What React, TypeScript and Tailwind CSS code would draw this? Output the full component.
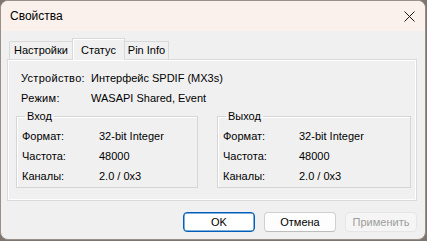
import React from 'react';

const font = { fontFamily: '"Liberation Sans", Arial, sans-serif' };

function InfoRow({ label, value }: { label: string; value: string }) {
    return (
        <div className="flex h-[20px] items-center">
            <span className="w-[70px] tracking-[0.3px]">{label}</span>
            <span>{value}</span>
        </div>
    );
}

function Group({ title, labelWidth, className }: { title: string; labelWidth: string; className: string }) {
    const rows = [
        ['Формат:', '32-bit Integer'],
        ['Частота:', '48000'],
        ['Каналы:', '2.0 / 0x3'],
    ];
    return (
        <fieldset className={`border border-[#d5d5d5] shadow-[inset_1px_1px_0_#ffffff] pb-[1px] ${className}`}>
            <legend className="ml-[8px] px-[2px] leading-[13px]">{title}</legend>
            <div className="pt-[3px] pl-[5px]">
                {rows.map(([l, v]) => (
                    <div key={l} className="flex h-[20px] items-center">
                        <span className={labelWidth}>{l}</span>
                        <span>{v}</span>
                    </div>
                ))}
            </div>
        </fieldset>
    );
}

export default function App() {
    return (
        <div className="w-[427px] h-[241px] bg-[#7d756f] text-[11px] text-black" style={font}>
            <div className="w-[426px] h-[240px] flex flex-col rounded-lg overflow-hidden border border-[#9a8f86] bg-[#f0f0f0]">
                {/* Title bar */}
                <div className="h-[30px] flex items-center justify-between bg-[#faf1ec] pl-[9px] pr-[9px]">
                    <span className="text-[12px]">Свойства</span>
                    <svg width="11" height="11" viewBox="0 0 11 11" className="mr-[1px]">
                        <path d="M0.5 0.5 L10.5 10.5 M10.5 0.5 L0.5 10.5" stroke="#1a1a1a" strokeWidth="1" />
                    </svg>
                </div>

                {/* Body */}
                <div className="flex-1 flex flex-col pl-[6px] pr-[8px] pt-[7px]">
                    {/* Tabs */}
                    <div className="flex items-end h-[21px] pl-[2px] relative z-10">
                        <div className="h-[18px] w-[64px] flex items-center justify-center border border-b-0 border-[#d9d9d9] bg-[#f0f0f0]">
                            Настройки
                        </div>
                        <div className="h-[22px] -mb-px w-[53px] -ml-px flex items-start pt-[3px] justify-center border border-b-0 border-[#d9d9d9] bg-[#f0f0f0] shadow-[inset_1px_1px_0_#ffffff]">
                            Статус
                        </div>
                        <div className="h-[18px] w-[45px] -ml-px flex items-center justify-center border border-b-0 border-[#d9d9d9] bg-[#f0f0f0]">
                            Pin Info
                        </div>
                    </div>

                    {/* Panel */}
                    <div className="h-[142px] border border-[#dadada] shadow-[inset_1px_1px_0_#ffffff,inset_-1px_-1px_0_#ffffff] pl-[8px] pr-[5px] pt-[8px]">
                        <div className="pl-[5px]">
                            <InfoRow label="Устройство:" value="Интерфейс SPDIF (MX3s)" />
                            <InfoRow label="Режим:" value="WASAPI Shared, Event" />
                        </div>
                        <div className="flex gap-[19px] mt-[2px]">
                            <Group title="Вход" labelWidth="w-[77px]" className="w-[182px]" />
                            <Group title="Выход" labelWidth="w-[76px]" className="w-[194px]" />
                        </div>
                    </div>

                    {/* Buttons */}
                    <div className="flex justify-end gap-[9px] mt-[11px]">
                        <button className="w-[72px] h-[20px] rounded-[4px] border border-[#005fb8] bg-white shadow-[inset_0_0_0_0.5px_#005fb8]">
                            OK
                        </button>
                        <button className="w-[72px] h-[20px] rounded-[4px] border border-[#d0d0d0] border-b-[#bdbdbd] bg-[#fdfdfd]">
                            Отмена
                        </button>
                        <button className="w-[72px] h-[20px] rounded-[4px] border border-[#e5e5e5] bg-[#f5f5f5] text-[#9d9d9d]">
                            Применить
                        </button>
                    </div>
                </div>
            </div>
        </div>
    );
}
